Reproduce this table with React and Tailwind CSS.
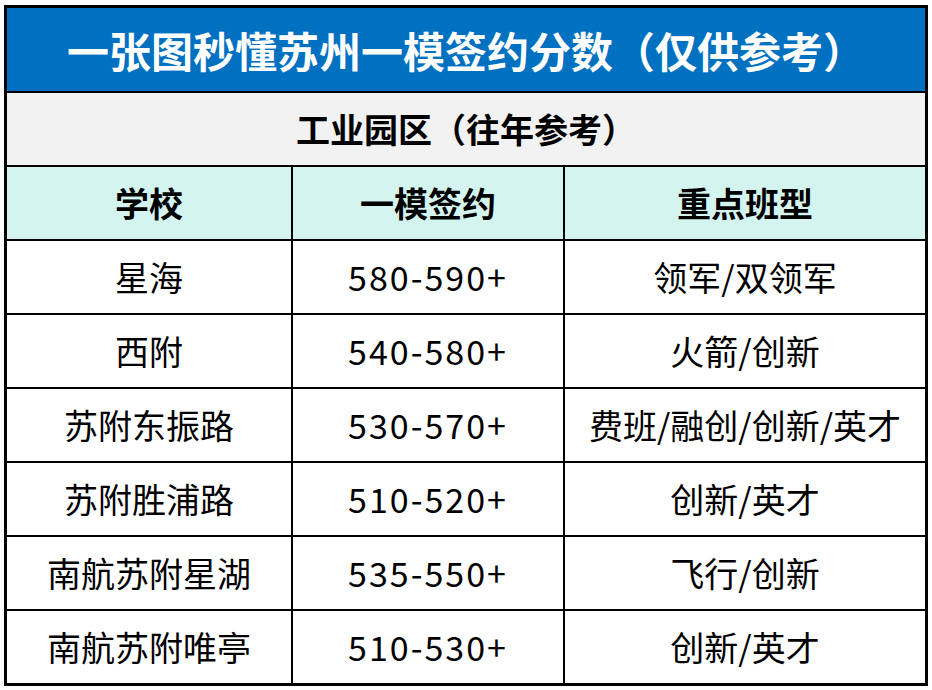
import React from 'react';

const rows = [
  ['星海', '580-590+', '领军/双领军'],
  ['西附', '540-580+', '火箭/创新'],
  ['苏附东振路', '530-570+', '费班/融创/创新/英才'],
  ['苏附胜浦路', '510-520+', '创新/英才'],
  ['南航苏附星湖', '535-550+', '飞行/创新'],
  ['南航苏附唯亭', '510-530+', '创新/英才'],
];

const font = { fontFamily: '"Noto Sans CJK SC", "Noto Sans", sans-serif' };

export default function App() {
  return (
    <div className="w-[932px] h-[690px] bg-white pl-[4px] pt-[5px]" style={font}>
      <div className="w-[924px] h-[681px] border-[3px] border-black flex flex-col">
        <div className="h-[85px] shrink-0 bg-[#0070c0] border-b-2 border-black flex items-center justify-center text-white text-[42px] font-bold leading-none">
          一张图秒懂苏州一模签约分数（仅供参考）
        </div>
        <div className="h-[74px] shrink-0 bg-[#f2f2f2] border-b-2 border-black flex items-center justify-center text-black text-[34px] font-bold leading-none">
          工业园区（往年参考）
        </div>
        <div className="h-[74px] shrink-0 bg-[#d3f4ef] border-b-2 border-black grid grid-cols-[286px_272px_1fr] text-black text-[34px] font-bold leading-none">
          <div className="border-r-2 border-black flex items-center justify-center">学校</div>
          <div className="border-r-2 border-black flex items-center justify-center">一模签约</div>
          <div className="flex items-center justify-center">重点班型</div>
        </div>
        {rows.map((r, i) => (
          <div
            key={r[0]}
            className={`shrink-0 grid grid-cols-[286px_272px_1fr] text-black text-[34px] leading-none ${
              i < rows.length - 1 ? 'h-[74px] border-b-2 border-black' : 'h-[72px]'
            }`}
          >
            <div className="border-r-2 border-black flex items-center justify-center">{r[0]}</div>
            <div className="border-r-2 border-black flex items-center justify-center tracking-[2px]">{r[1]}</div>
            <div className="flex items-center justify-center">{r[2]}</div>
          </div>
        ))}
      </div>
    </div>
  );
}
